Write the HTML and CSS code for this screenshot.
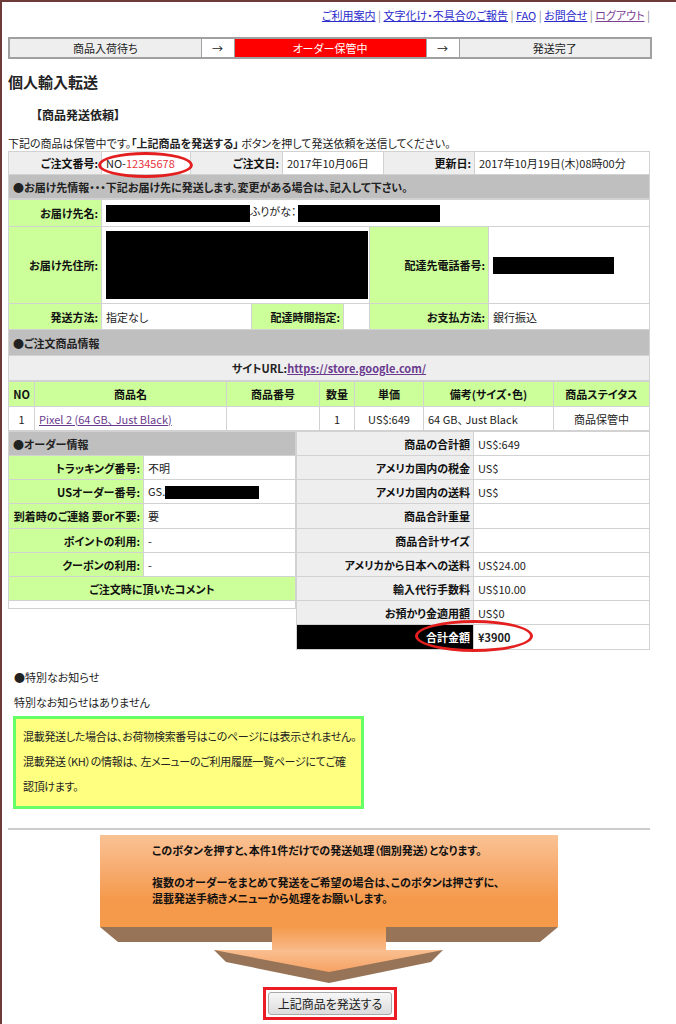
FILE: index.html
```html
<!DOCTYPE html>
<html lang="ja">
<head>
    <meta charset="UTF-8">
    <meta name="viewport" content="width=device-width, initial-scale=1.0">
    <title>個人輸入転送 - 商品発送依頼</title>
    <link rel="stylesheet" href="styles.css">
</head>
<body>
<div class="frame">
<div class="page">
    <div class="topnav">
        <a href="#">ご利用案内</a> | <a href="#">文字化け・不具合のご報告</a> | <a href="#">FAQ</a> | <a href="#">お問合せ</a> | <a href="#" class="visited">ログアウト</a> |
    </div>

    <table class="steps">
        <tr>
            <td class="step">商品入荷待ち</td>
            <td class="arrow">→</td>
            <td class="step current">オーダー保管中</td>
            <td class="arrow">→</td>
            <td class="step">発送完了</td>
        </tr>
    </table>

    <h1>個人輸入転送</h1>
    <h2>【商品発送依頼】</h2>
    <p class="lead">下記の商品は保管中です。<b>「上記商品を発送する」</b> ボタンを押して発送依頼を送信してください。</p>

    <table class="grid order">
        <colgroup><col class="c1"><col class="c2"><col class="c3"><col class="c4"><col class="c5"><col></colgroup>
        <tr class="r23">
            <th class="gray">ご注文番号:</th>
            <td>NO-<span class="red">12345678</span></td>
            <th class="gray">ご注文日:</th>
            <td>2017年10月06日</td>
            <th class="gray">更新日:</th>
            <td>2017年10月19日(木)08時00分</td>
        </tr>
        <tr class="r24">
            <td colspan="6" class="section">●お届け先情報・・・下記お届け先に発送します。変更がある場合は、記入して下さい。</td>
        </tr>
    </table>

    <table class="grid address">
        <colgroup><col class="c1"><col class="c2"><col class="c3"><col class="c4"><col class="c5"><col></colgroup>
        <tr class="r27">
            <th class="green">お届け先名:</th>
            <td colspan="5"><span class="redact name"></span>ふりがな：<span class="redact kana"></span></td>
        </tr>
        <tr class="r77">
            <th class="green">お届け先住所:</th>
            <td colspan="3"><span class="redact addr"></span></td>
            <th class="green">配達先電話番号:</th>
            <td><span class="redact tel"></span></td>
        </tr>
        <tr class="r26">
            <th class="green">発送方法:</th>
            <td>指定なし</td>
            <th class="green">配達時間指定:</th>
            <td></td>
            <th class="green">お支払方法:</th>
            <td>銀行振込</td>
        </tr>
        <tr class="r26">
            <td colspan="6" class="section">●ご注文商品情報</td>
        </tr>
        <tr class="r25">
            <td colspan="6" class="url"><b>サイトURL:</b><a href="#">https://store.google.com/</a></td>
        </tr>
    </table>

    <table class="grid items">
        <colgroup><col class="c1"><col class="c2"><col class="c3"><col class="c4"><col class="c5"><col class="c6"><col></colgroup>
        <tr class="r25">
            <th class="green center">NO</th>
            <th class="green center">商品名</th>
            <th class="green center">商品番号</th>
            <th class="green center">数量</th>
            <th class="green center">単価</th>
            <th class="green center">備考(サイズ・色)</th>
            <th class="green center">商品ステイタス</th>
        </tr>
        <tr class="r24">
            <td class="center">1</td>
            <td><a href="#">Pixel 2 (64 GB、 Just Black)</a></td>
            <td></td>
            <td class="center">1</td>
            <td class="center">US$:649</td>
            <td>64 GB、 Just Black</td>
            <td class="center">商品保管中</td>
        </tr>
    </table>

    <div class="lower">
        <table class="grid orderinfo">
            <colgroup><col class="c1"><col></colgroup>
            <tr class="r24"><td colspan="2" class="section">●オーダー情報</td></tr>
            <tr class="r24"><th class="green">トラッキング番号:</th><td>不明</td></tr>
            <tr class="r24"><th class="green">USオーダー番号:</th><td>GS.<span class="redact us"></span></td></tr>
            <tr class="r25"><th class="green">到着時のご連絡 要or不要:</th><td>要</td></tr>
            <tr class="r24"><th class="green">ポイントの利用:</th><td>-</td></tr>
            <tr class="r24"><th class="green">クーポンの利用:</th><td>-</td></tr>
            <tr class="r24"><th colspan="2" class="green center">ご注文時に頂いたコメント</th></tr>
            <tr class="r8"><td colspan="2"></td></tr>
        </table>

        <table class="grid totals">
            <colgroup><col class="c1"><col></colgroup>
            <tr class="r24"><th class="gray">商品の合計額</th><td>US$:649</td></tr>
            <tr class="r24"><th class="gray">アメリカ国内の税金</th><td>US$</td></tr>
            <tr class="r24"><th class="gray">アメリカ国内の送料</th><td>US$</td></tr>
            <tr class="r25"><th class="gray">商品合計重量</th><td></td></tr>
            <tr class="r24"><th class="gray">商品合計サイズ</th><td></td></tr>
            <tr class="r24"><th class="gray">アメリカから日本への送料</th><td>US$24.00</td></tr>
            <tr class="r24"><th class="gray">輸入代行手数料</th><td>US$10.00</td></tr>
            <tr class="r24"><th class="gray">お預かり金適用額</th><td>US$0</td></tr>
            <tr class="r25"><th class="black">合計金額</th><td><b>¥3900</b></td></tr>
        </table>
    </div>

    <p class="notice-title">●特別なお知らせ</p>
    <p class="notice-text">特別なお知らせはありません</p>

    <div class="memo">
        混載発送した場合は、お荷物検索番号はこのページには表示されません。<br>
        混載発送（KH）の情報は、 左メニューのご利用履歴一覧ページにてご確<br>
        認頂けます。
    </div>

    <hr class="rule">

    <div class="send">
        <div class="send-box">
            このボタンを押すと、本件1件だけでの発送処理（個別発送）となります。<br><br>
            複数のオーダーをまとめて発送をご希望の場合は、このボタンは押さずに、<br>
            混載発送手続きメニューから処理をお願いします。
        </div>
        <svg class="send-arrow" width="458" height="57" viewBox="0 0 458 57">
            <defs>
                <linearGradient id="stemGrad" x1="0" y1="0" x2="0" y2="1">
                    <stop offset="0" stop-color="#f59a4c"/>
                    <stop offset="1" stop-color="#f9bb8c"/>
                </linearGradient>
                <linearGradient id="headGrad" x1="0" y1="0" x2="0" y2="1">
                    <stop offset="0" stop-color="#fabf91"/>
                    <stop offset="1" stop-color="#f6a263"/>
                </linearGradient>
            </defs>
            <polygon points="0,0 172,0 172,15 18,15" fill="#977457"/>
            <polygon points="286,0 458,0 440,15 286,15" fill="#977457"/>
            <rect x="172" y="0" width="114" height="24" fill="url(#stemGrad)"/>
            <polygon points="114,23 343,23 331,35 229,56 126,35" fill="#977457"/>
            <polygon points="114,23 343,23 229,45" fill="url(#headGrad)"/>
        </svg>
        <div class="send-action">
            <span class="send-frame"><button class="send-btn">上記商品を発送する</button></span>
        </div>
    </div>

    <span class="mark mark-order"></span>
    <span class="mark mark-total"></span>
</div>
</div>
</body>
</html>
```

FILE: styles.css
```css
* {
    box-sizing: border-box;
}

html, body {
    margin: 0;
    padding: 0;
}

body {
    font-family: "Noto Sans CJK JP", "Noto Sans", sans-serif;
    font-size: 11px;
    color: #222;
    background: #fff;
    font-feature-settings: "palt";
}

.frame {
    border-top: 2px solid #6d3b37;
    border-left: 2px solid #6d3b37;
    min-height: 1024px;
    padding-left: 6px;
}

.page {
    position: relative;
    width: 642px;
}

/* top links */
.topnav {
    padding-top: 6px;
    text-align: right;
    line-height: 14px;
    color: #888;
}

.topnav a {
    color: #2b2bcc;
}

.topnav a.visited {
    color: #7b3f93;
}

/* progress */
.steps {
    width: 100%;
    margin-top: 15px;
    border-collapse: collapse;
    table-layout: fixed;
    border: 2px solid #a0a0a0;
}

.steps td {
    height: 20px;
    padding: 0;
    text-align: center;
    border: 1px solid #a0a0a0;
    background: #eee;
}

.steps td.step {
    width: 192px;
}

.steps td.arrow {
    width: 33px;
    background: #fff;
}

.steps td.current {
    background: #ff0000;
    color: #fff;
}

h1 {
    margin: 13px 0 0;
    font-size: 15px;
    line-height: 20px;
    font-weight: bold;
}

h2 {
    margin: 15px 0 0 28px;
    font-size: 12px;
    line-height: 16px;
    font-weight: bold;
}

.lead {
    margin: 13px 0 0;
    line-height: 14px;
}

/* tables */
.grid {
    border-collapse: collapse;
    table-layout: fixed;
    width: 642px;
}

.grid th, .grid td {
    border: 1px solid #d2d2d2;
    padding: 0 4px;
    line-height: 14px;
    text-align: left;
    vertical-align: middle;
    background: #fff;
    font-weight: normal;
}

.grid th {
    text-align: right;
    font-weight: bold;
    padding: 0 3px;
    color: #111;
}

.grid .center {
    text-align: center;
}

.grid .gray {
    background: #eeeeee;
}

.grid .green {
    background: #ccff99;
}

.grid .black {
    background: #000;
    color: #fff;
}

.grid .section {
    background: #bfbfbf;
    font-weight: bold;
    padding-left: 4px;
}

.grid .url {
    background: #eeeeee;
    text-align: center;
}

.grid a {
    color: #6a3a8e;
}

.grid .url a {
    font-weight: bold;
}

.order {
    margin-top: 1px;
}

.address, .items {
    border-top: none;
}

.order .c1, .address .c1 { width: 93px; }
.order .c2 { width: 89px; }
.order .c3 { width: 92px; }
.order .c4 { width: 101px; }
.order .c5 { width: 91px; }

.address .c2 { width: 150px; }
.address .c3 { width: 92px; }
.address .c4 { width: 26px; }
.address .c5 { width: 119px; }

.items .c1 { width: 26px; }
.items .c2 { width: 192px; }
.items .c3 { width: 93px; }
.items .c4 { width: 35px; }
.items .c5 { width: 69px; }
.items .c6 { width: 130px; }

.r8 { height: 8px; }
.r23 { height: 23px; }
.r24 { height: 24px; }
.r25 { height: 25px; }
.r26 { height: 26px; }
.r27 { height: 27px; }
.r77 { height: 77px; }

.red {
    color: #e8333a;
}

.redact {
    display: inline-block;
    background: #000;
    vertical-align: middle;
}

.redact.name { width: 144px; height: 17px; margin-right: 0; }
.redact.kana { width: 142px; height: 17px; margin-left: 2px; }
.redact.addr { width: 262px; height: 68px; }
.redact.tel { width: 121px; height: 17px; }
.redact.us { width: 94px; height: 13px; }

/* order info + totals */
.lower {
    display: flex;
    align-items: flex-start;
}

.orderinfo {
    width: 288px;
}

.orderinfo .c1 {
    width: 135px;
}

.totals {
    width: 354px;
}

.totals .c1 {
    width: 177px;
}

.notice-title {
    margin: 20px 0 0 6px;
    line-height: 14px;
}

.notice-text {
    margin: 11px 0 0 6px;
    line-height: 14px;
}

.memo {
    margin: 7px 0 0 5px;
    width: 351px;
    height: 93px;
    border: 3px solid #66ff66;
    background: #ffff80;
    padding: 5px 0 0 7px;
    line-height: 25px;
    white-space: nowrap;
    letter-spacing: -0.3px;
}

.rule {
    margin: 19px 0 0;
    border: none;
    border-top: 2px solid #cccccc;
}

/* send block */
.send {
    margin-top: 5px;
}

.send-box {
    width: 458px;
    height: 92px;
    margin: 0 auto;
    padding: 7px 0 0 52px;
    line-height: 16px;
    font-weight: bold;
    color: #111;
    background: linear-gradient(#fac294 0%, #f7ad72 35%, #f59a4c 70%, #f59a4a 100%);
}

.send-arrow {
    display: block;
    margin: 0 auto;
}

.send-action {
    text-align: center;
    margin-top: 3px;
}

.send-frame {
    display: inline-block;
    border: 3px solid #ec1c24;
    padding: 2px;
    margin-left: 2px;
}

.send-btn {
    display: block;
    font-family: inherit;
    font-size: 12px;
    font-feature-settings: "palt";
    height: 23px;
    padding: 0 9px;
    color: #222;
    border: 1px solid #a9a9a9;
    border-radius: 3px;
    background: linear-gradient(#f7f7f7, #dcdcdc);
}

/* red marker circles */
.mark {
    position: absolute;
    border: 3px solid #e3201f;
    border-radius: 50%;
}

.mark-order {
    left: 90px;
    top: 150px;
    width: 95px;
    height: 26px;
}

.mark-total {
    left: 407px;
    top: 618px;
    width: 118px;
    height: 32px;
}
```
